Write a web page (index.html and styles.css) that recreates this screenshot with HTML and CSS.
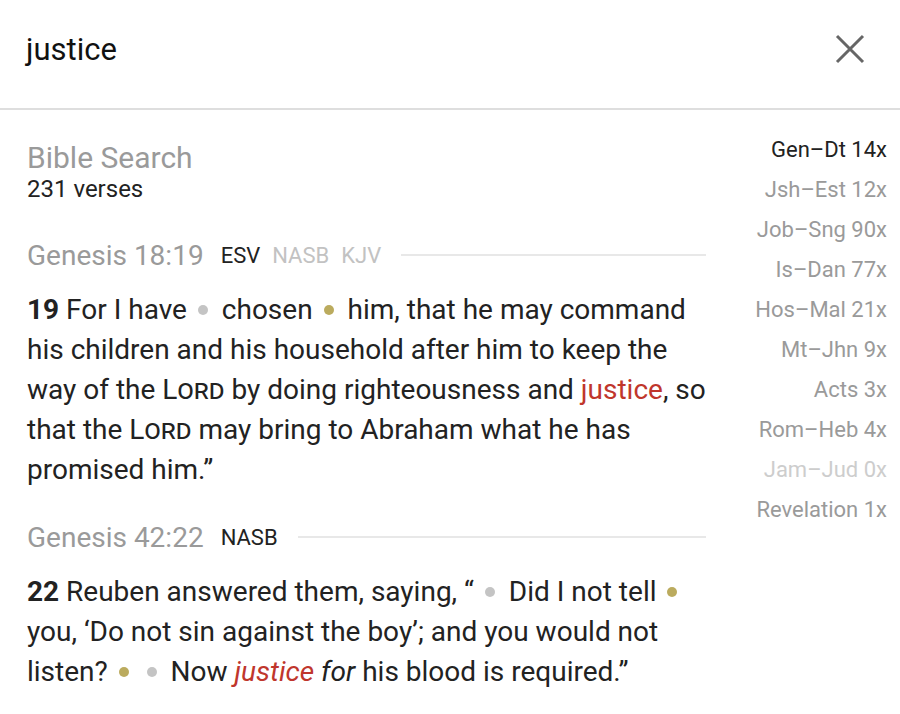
FILE: index.html
```html
<!DOCTYPE html>
<html>
<head>
<meta charset="utf-8">
<link rel="stylesheet" href="styles.css">
</head>
<body>
<header class="search-bar">
  <div class="query">justice</div>
  <svg class="close" width="30" height="30" viewBox="0 0 30 30"><path d="M2 2 L28 28 M28 2 L2 28" stroke="#666" stroke-width="3" fill="none"/></svg>
</header>
<main class="layout">
  <section class="results">
    <div class="title">Bible Search</div>
    <div class="count">231 verses</div>

    <div class="ref-row first">
      <span class="ref">Genesis 18:19</span>
      <span class="ver active">ESV</span>
      <span class="ver">NASB</span>
      <span class="ver">KJV</span>
      <span class="rule"></span>
    </div>
    <p class="verse"><b>19</b> For I have <span class="dot grey"></span> chosen <span class="dot gold"></span> him, that he may command his children and his household after him to keep the way of the <span class="sc">Lord</span> by doing righteousness and <span class="hit">justice</span>, so that the <span class="sc">Lord</span> may bring to Abraham what he has promised him.”</p>

    <div class="ref-row">
      <span class="ref">Genesis 42:22</span>
      <span class="ver active">NASB</span>
      <span class="rule"></span>
    </div>
    <p class="verse"><b>22</b> Reuben answered them, saying, “ <span class="dot grey"></span> Did I not tell <span class="dot gold"></span> you, ‘Do not sin against the boy’; and you would not listen? <span class="dot gold"></span> <span class="dot grey"></span> Now <i class="hit">justice</i> <i>for</i> his blood is required.”</p>
  </section>
  <nav class="ranges">
    <div class="range current">Gen–Dt 14x</div>
    <div class="range">Jsh–Est 12x</div>
    <div class="range">Job–Sng 90x</div>
    <div class="range">Is–Dan 77x</div>
    <div class="range">Hos–Mal 21x</div>
    <div class="range">Mt–Jhn 9x</div>
    <div class="range">Acts 3x</div>
    <div class="range">Rom–Heb 4x</div>
    <div class="range empty">Jam–Jud 0x</div>
    <div class="range">Revelation 1x</div>
  </nav>
</main>
</body>
</html>
```
FILE: styles.css
```css
html, body {
  margin: 0;
  padding: 0;
  background: #fff;
  font-family: Roboto, "Liberation Sans", sans-serif;
  color: #222;
}
.search-bar {
  border-bottom: 2px solid #dedede;
  display: flex;
  align-items: center;
  justify-content: space-between;
  padding: 0 35px 0 26px;
  box-sizing: border-box;
  height: 110px;
}
.query {
  font-size: 31px;
  color: #111;
  margin-top: -10px;
}
.close {
  margin-top: -10px;
}
.layout {
  display: flex;
  justify-content: space-between;
  align-items: flex-start;
}
.results {
  width: 679px;
  padding: 31px 0 0 27px;
}
.title {
  font-size: 30px;
  line-height: 34px;
  color: #9a9a9a;
}
.count {
  font-size: 24px;
  line-height: 28px;
  color: #222;
}
.ref-row {
  display: flex;
  align-items: center;
  margin-top: 27px;
  height: 40px;
}
.ref-row.first { margin-top: 32px; }
.ref {
  font-size: 28px;
  color: #9a9a9a;
  margin-right: 17px;
}
.ver {
  font-size: 22px;
  color: #c2c2c2;
  margin-right: 12px;
}
.ver.active { color: #222; }
.rule {
  flex: 1;
  height: 2px;
  background: #e8e8e8;
  margin-left: 8px;
}
.verse {
  font-size: 28px;
  line-height: 40px;
  margin: 15px 0 0;
  color: #222;
}
.verse b { font-weight: 700; }
.sc { font-variant: small-caps; }
.hit { color: #c0362c; }
.dot {
  display: inline-block;
  width: 10px;
  height: 10px;
  border-radius: 50%;
  vertical-align: 4px;
  margin: 0 7px 0 4px;
}
.dot.grey { background: #c4c4c4; }
.dot.gold { background: #bbab5e; }
.ranges {
  padding: 20px 13px 0 0;
  display: flex;
  flex-direction: column;
  align-items: flex-end;
}
.range {
  font-size: 22px;
  line-height: 40px;
  color: #9a9a9a;
}
.range.current { color: #222; }
.range.empty { color: #cdcdcd; }
```
